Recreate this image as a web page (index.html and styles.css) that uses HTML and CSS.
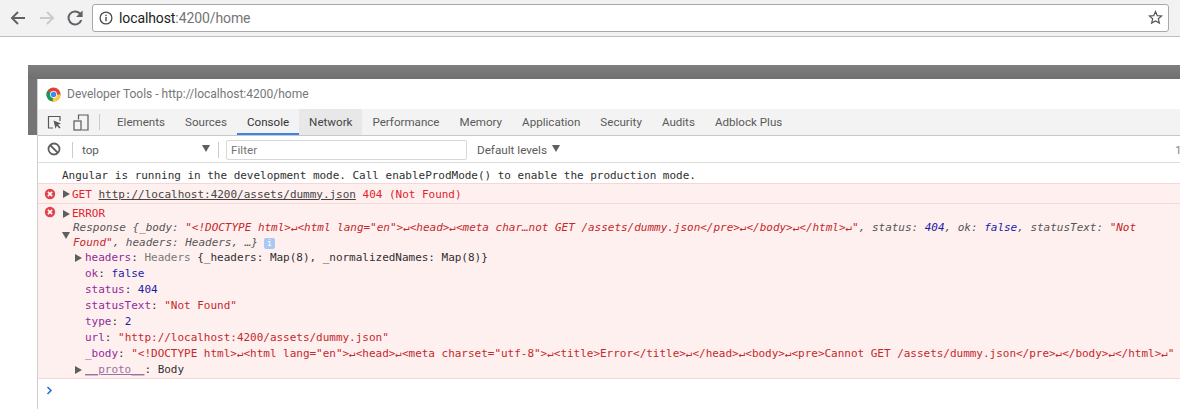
FILE: index.html
```html
<!DOCTYPE html>
<html lang="en">
<head>
<meta charset="utf-8">
<title>Developer Tools</title>
<link rel="stylesheet" href="styles.css">
</head>
<body>
<header class="chrome">
  <svg class="nav-icon" viewBox="0 0 16 16"><path d="M15 7H4.4l4.3-4.3L7.3 1.3 0.6 8l6.7 6.7 1.4-1.4L4.4 9H15z" fill="#5f6368"/></svg>
  <svg class="nav-icon dim" viewBox="0 0 16 16"><path d="M1 7h10.6L7.3 2.7l1.4-1.4L15.4 8l-6.7 6.7-1.4-1.4L11.6 9H1z" fill="#c9cacc"/></svg>
  <svg class="nav-icon reload" viewBox="0 0 16 16"><path d="M13.4 2.6A7.5 7.5 0 1 0 15.3 10h-2.1a5.5 5.5 0 1 1-1.2-5.9L9 7h6.6V0.4z" fill="#5f6368"/></svg>
  <div class="omnibox">
    <svg class="info" viewBox="0 0 14 14"><circle cx="7" cy="7" r="5.9" fill="none" stroke="#4a4a4a" stroke-width="1.3"/><rect x="6.3" y="6" width="1.4" height="4.2" fill="#4a4a4a"/><rect x="6.3" y="3.7" width="1.4" height="1.4" fill="#4a4a4a"/></svg>
    <span class="url"><span class="host">localhost</span>:4200/home</span>
    <svg class="star" viewBox="0 0 16 16"><path d="M8 1.7l1.9 4.3 4.6.4-3.5 3 1.1 4.6L8 11.6 3.9 14 5 9.4l-3.5-3 4.6-.4z" fill="none" stroke="#555" stroke-width="1.3" stroke-linejoin="miter"/></svg>
  </div>
</header>

<main class="stage">
  <div class="band"></div>
  <div class="stage-row">
    <div class="strip"></div>
    <section class="devtools">
      <div class="titlebar">
        <svg class="logo" viewBox="0 0 16 16">
          <circle cx="8" cy="8" r="7.5" fill="#db4437"/>
          <path d="M8 8L1.5 4.2A7.5 7.5 0 0 0 7 15.4z" fill="#0f9d58"/>
          <path d="M8 8h7.5A7.5 7.5 0 0 1 7 15.4z" fill="#ffcd40"/>
          <circle cx="8" cy="8" r="3.7" fill="#fff"/>
          <circle cx="8" cy="8" r="2.9" fill="#4285f4"/>
        </svg>
        <span>Developer Tools - http://localhost:4200/home</span>
      </div>
      <nav class="tabbar">
        <svg class="tool-inspect" viewBox="0 0 15 15"><path d="M6 13H1.5V1.5H13V6" fill="none" stroke="#5a5a5a" stroke-width="1.2"/><path d="M6.5 5.5l7.5 3-3 1.2 2.6 2.8-1.2 1.1-2.6-2.8-1.3 3z" fill="#5a5a5a"/></svg>
        <svg class="tool-device" viewBox="0 0 16 17"><path d="M5.5 5.5V1h9.5v15H9" fill="none" stroke="#5a5a5a" stroke-width="1.2"/><rect x="1" y="7" width="7" height="9" fill="none" stroke="#5a5a5a" stroke-width="1.2"/></svg>
        <i class="sep tab-sep"></i>
        <span class="tab">Elements</span>
        <span class="tab">Sources</span>
        <span class="tab active">Console</span>
        <span class="tab hover">Network</span>
        <span class="tab">Performance</span>
        <span class="tab">Memory</span>
        <span class="tab">Application</span>
        <span class="tab">Security</span>
        <span class="tab">Audits</span>
        <span class="tab">Adblock Plus</span>
      </nav>
      <div class="toolbar">
        <svg class="block" viewBox="0 0 14 14"><circle cx="7" cy="7" r="5.5" fill="none" stroke="#5f5f5f" stroke-width="1.8"/><path d="M3 3l8 8" stroke="#5f5f5f" stroke-width="1.8"/></svg>
        <i class="sep ctx-sep"></i>
        <span class="context">top</span>
        <i class="drop ctx-drop"></i>
        <i class="sep filter-sep"></i>
        <span class="filter">Filter</span>
        <span class="levels">Default levels</span>
        <i class="drop"></i>
        <span class="count">1</span>
      </div>
      <div class="console">
        <div class="line info-line">Angular is running in the development mode. Call enableProdMode() to enable the production mode.</div>
        <div class="msg get-msg">
          <svg class="err" viewBox="0 0 12 12"><circle cx="6" cy="6" r="5.2" fill="#e0434a"/><path d="M3.9 3.9l4.2 4.2M8.1 3.9l-4.2 4.2" stroke="#fff" stroke-width="1.5"/></svg>
          <i class="tri right"></i>
          <span class="red">GET <a class="link">http://localhost:4200/assets/dummy.json</a> 404 (Not Found)</span>
        </div>
        <div class="msg err-msg">
          <div class="err-head">
            <svg class="err" viewBox="0 0 12 12"><circle cx="6" cy="6" r="5.2" fill="#e0434a"/><path d="M3.9 3.9l4.2 4.2M8.1 3.9l-4.2 4.2" stroke="#fff" stroke-width="1.5"/></svg>
            <i class="tri right"></i>
            <span class="red">ERROR</span>
          </div>
          <div class="response">
            <i class="tri down"></i>
            <div class="summary">
              <div><span class="key-i">Response {_body: </span><span class="str">"&lt;!DOCTYPE html&gt;↵&lt;html lang="en"&gt;↵&lt;head&gt;↵&lt;meta char…not GET /assets/dummy.json&lt;/pre&gt;↵&lt;/body&gt;↵&lt;/html&gt;↵"</span><span class="key-i">, status: </span><span class="num">404</span><span class="key-i">, ok: </span><span class="num">false</span><span class="key-i">, statusText: </span><span class="str">"Not</span></div>
              <div><span class="str">Found"</span><span class="key-i">, headers: Headers, …}</span><b class="badge">i</b></div>
            </div>
          </div>
          <ul class="props">
            <li class="has-tri"><i class="tri right"></i><span class="key">headers</span><span>:&nbsp;</span><span class="gray">Headers&nbsp;</span><span>{_headers: Map(8), _normalizedNames: Map(8)}</span></li>
            <li><span class="key">ok</span>: <span class="num">false</span></li>
            <li><span class="key">status</span>: <span class="num">404</span></li>
            <li><span class="key">statusText</span>: <span class="val">"Not Found"</span></li>
            <li><span class="key">type</span>: <span class="num">2</span></li>
            <li><span class="key">url</span>: <span class="val">"http://localhost:4200/assets/dummy.json"</span></li>
            <li><span class="key">_body</span>: <span class="val">"&lt;!DOCTYPE html&gt;↵&lt;html lang="en"&gt;↵&lt;head&gt;↵&lt;meta charset="utf-8"&gt;↵&lt;title&gt;Error&lt;/title&gt;↵&lt;/head&gt;↵&lt;body&gt;↵&lt;pre&gt;Cannot GET /assets/dummy.json&lt;/pre&gt;↵&lt;/body&gt;↵&lt;/html&gt;↵"</span></li>
            <li class="has-tri"><i class="tri right"></i><span class="key dim-key">__proto__</span><span>:&nbsp;Body</span></li>
          </ul>
        </div>
        <div class="prompt"><svg viewBox="0 0 7 9"><path d="M1.5 1l3.5 3.5L1.5 8" fill="none" stroke="#2a6fd6" stroke-width="1.6"/></svg></div>
      </div>
    </section>
  </div>
</main>
</body>
</html>
```
FILE: styles.css
```css
* { box-sizing: border-box; }
html, body { margin: 0; padding: 0; background: #fff; }
body { width: 1180px; height: 409px; overflow: hidden; font-family: Roboto, sans-serif; }

/* browser chrome */
.chrome { height: 37px; background: #f2f2f2; border-bottom: 1px solid #bdbdbd; display: flex; align-items: center; padding: 0 11px 1px 10px; }
.nav-icon { width: 16px; height: 16px; margin-right: 13px; flex: none; margin-top: 1px; }
.reload { margin-right: 9px; margin-left: -1px; }
.omnibox { flex: 1; height: 28px; background: #fff; border: 1px solid #a8a8a8; border-radius: 3px; display: flex; align-items: center; padding: 0 5px 0 6px; }
.info { width: 14px; height: 14px; flex: none; margin-right: 6px; }
.url { font-size: 14px; letter-spacing: -0.1px; color: #757575; flex: 1; }
.host { color: #222; }
.star { width: 15px; height: 15px; flex: none; }

/* backdrop */
.stage { margin: 28px 0 0 28px; }
.band { height: 14px; background: linear-gradient(#7f7f7f, #6f6f6f); }
.stage-row { display: flex; align-items: flex-start; }
.strip { width: 9px; height: 56px; flex: none; background: #757575; }
.devtools { flex: 1; min-width: 0; border-left: 1px solid #cfcfcf; height: 330px; }

.titlebar { height: 30px; display: flex; align-items: center; padding-left: 8px; font-size: 12px; color: #777; }
.logo { width: 15px; height: 15px; margin-right: 6px; flex: none; }

.tabbar { height: 27px; background: #f3f3f3; border-bottom: 1px solid #c8c8c8; display: flex; align-items: stretch; font-size: 11.6px; color: #5a5a5a; }
.tool-inspect { width: 15px; height: 15px; margin: 6px 11px 0 9px; flex: none; }
.tool-device { width: 16px; height: 17px; margin: 5px 0 0 0; flex: none; }
.sep { display: block; width: 1px; background: #ccc; flex: none; }
.tab-sep { height: 16px; margin: 5px 7px 0 10px; }
.tab { padding: 0 10px; display: flex; align-items: center; height: 26px; white-space: nowrap; }
.tab.active { color: #333; border-bottom: 2px solid #3f85e0; padding-top: 2px; }
.tab.hover { background: #e8e8e8; color: #444; }

.toolbar { height: 27px; border-bottom: 1px solid #dcdcdc; display: flex; align-items: center; font-size: 11.7px; color: #5a5a5a; padding-top: 1px; }
.block { width: 14px; height: 14px; margin: -1px 11px 0 9px; flex: none; }
.ctx-sep { height: 16px; }
.context { margin-left: 9px; width: 120px; flex: none; }
.drop { display: block; width: 0; height: 0; flex: none; border-left: 4.5px solid transparent; border-right: 4.5px solid transparent; border-top: 7px solid #5f5f5f; margin-top: -3px; }
.filter-sep { height: 16px; margin: 0 7px 0 8px; }
.filter { width: 241px; height: 20px; border: 1px solid #d8d8d8; border-radius: 2px; padding-left: 4px; line-height: 19px; color: #757575; flex: none; margin-right: 10px; }
.levels { margin-right: 5px; }
.count { margin-left: auto; margin-right: 0; color: #888; width: 5px; overflow: visible; }

/* console */
.console { font-family: "DejaVu Sans Mono", monospace; font-size: 11px; letter-spacing: -0.02px; color: #303030; white-space: nowrap; overflow: hidden; }
.line { height: 20px; line-height: 26px; padding-left: 24px; }
.msg { background: #fff0f0; border-top: 1px solid #f7d6d6; }
.get-msg { height: 20px; display: flex; align-items: center; padding-left: 6px; padding-top: 1px; }
.err-msg { height: 176px; border-bottom: 1px solid #f7d6d6; padding-left: 6px; }
.err-head { display: flex; align-items: center; height: 16px; padding-top: 3px; }
.err { width: 12px; height: 12px; flex: none; margin-right: 7px; }
.err-head .err { margin-top: -3px; }
.tri { display: block; width: 0; height: 0; flex: none; }
.tri.right { border-top: 4px solid transparent; border-bottom: 4px solid transparent; border-left: 7px solid #5f5f5f; margin-right: 2px; }
.tri.down { border-left: 4px solid transparent; border-right: 4px solid transparent; border-top: 7px solid #5f5f5f; }
.red { color: #e0232b; }
.link { color: #444; text-decoration: underline; }

.response { display: flex; padding-left: 18px; }
.response .tri.down { margin: 12px 3px 0 0; }
.summary div { height: 15px; line-height: 15px; }
.summary { font-style: italic; }
.key-i { color: #565656; }
.str { color: #c5282a; }
.num { color: #1c1ca8; }
.badge { display: inline-block; width: 11px; height: 11px; line-height: 11px; margin-left: 6px; text-align: center; font-size: 9px; font-style: normal; font-weight: normal; color: #fff; background: #a9c8f5; border-radius: 2px; vertical-align: 0; }

.props { list-style: none; margin: 0; padding: 0 0 0 41px; }
.props li { height: 16px; line-height: 16px; }
.has-tri { display: flex; align-items: center; margin-left: -10px; }
.has-tri .tri.right { margin-right: 3px; }
.key { color: #8d2b9a; }
.dim-key { color: #9a6fa3; text-decoration: underline; }
.gray { color: #777; }
.val { color: #c5282a; }

.prompt { height: 22px; padding: 7px 0 0 8px; }
.prompt svg { width: 7px; height: 9px; display: block; }
```
